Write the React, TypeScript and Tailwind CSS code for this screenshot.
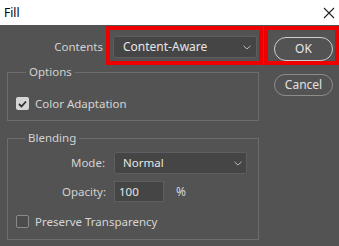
import React from "react";

const font = { fontFamily: '"Noto Sans", "Open Sans", sans-serif' };

function Chevron() {
  return (
    <svg width="8" height="5" viewBox="0 0 8 5" className="shrink-0">
      <path d="M0.5 0.8 L4 4 L7.5 0.8" fill="none" stroke="#b8b8b8" strokeWidth="1" />
    </svg>
  );
}

function Check({ checked }: { checked: boolean }) {
  if (checked) {
    return (
      <div className="w-[13px] h-[13px] rounded-[2px] bg-[#d6d6d6] flex items-center justify-center shrink-0">
        <svg width="9" height="8" viewBox="0 0 9 8">
          <path d="M1 4 L3.5 6.5 L8 1.5" fill="none" stroke="#2e2e2e" strokeWidth="1.8" />
        </svg>
      </div>
    );
  }
  return <div className="w-[13px] h-[13px] rounded-[2px] border border-[#8a8a8a] bg-[#4c4c4c] shrink-0" />;
}

export default function App() {
  return (
    <div className="w-[339px] h-[246px] overflow-hidden" style={font}>
      {/* title bar */}
      <div className="h-[25px] bg-white flex items-center justify-between">
        <span className="ml-[4px] text-[12px] text-black leading-none">Fill</span>
        <svg width="12" height="12" viewBox="0 0 12 12" className="mr-[4px]">
          <path d="M1 1 L11 11 M11 1 L1 11" stroke="#222" strokeWidth="1.1" />
        </svg>
      </div>
      {/* body */}
      <div className="h-[221px] bg-[#535353] flex pt-[1px]">
        {/* left column */}
        <div className="w-[264px] flex flex-col">
          <div className="flex items-start h-[39px]">
            <div className="w-[106px] pr-[3px] mt-[10px] h-[22px] flex items-center justify-end text-[11.5px] text-[#d2d2d2]">
              Contents
            </div>
            <div className="w-[157px] h-[39px] border-4 border-[#ee0000] pl-[3px] pr-[2px] pt-[6px] pb-[3px]">
              <div className="h-[22px] w-[144px] bg-[#454545] border border-[#5e5e5e] rounded-[2px] flex items-center justify-between pl-[9px] pr-[5px]">
                <span className="text-[12px] text-[#e6e6e6]">Content-Aware</span>
                <Chevron />
              </div>
            </div>
          </div>

          <fieldset className="ml-[7px] w-[252px] border border-[#6c6c6c] pl-[8px]">
            <legend className="ml-[10px] px-[3px] text-[11.5px] leading-[14px] text-[#d2d2d2]">Options</legend>
            <div className="mt-[18px] mb-[10px] h-[13px] flex items-center gap-[6px]">
              <Check checked />
              <span className="text-[11.5px] text-[#d6d6d6]">Color Adaptation</span>
            </div>
          </fieldset>

          <fieldset className="mt-[10px] ml-[7px] w-[252px] border border-[#6c6c6c] pl-[8px]">
            <legend className="ml-[9px] px-[3px] text-[11.5px] leading-[14px] text-[#d2d2d2]">Blending</legend>
            <div className="mt-[7px] flex items-center h-[22px]">
              <div className="w-[90px] text-right text-[11.5px] text-[#d2d2d2] pr-[1px]">Mode:</div>
              <div className="ml-[8px] h-[22px] w-[133px] bg-[#454545] border border-[#5e5e5e] rounded-[2px] flex items-center justify-between pl-[8px] pr-[4px]">
                <span className="text-[11.5px] text-[#e6e6e6]">Normal</span>
                <Chevron />
              </div>
            </div>
            <div className="mt-[7px] flex items-center h-[21px]">
              <div className="w-[90px] text-right text-[11.5px] text-[#d2d2d2]">Opacity:</div>
              <div className="ml-[8px] h-[21px] w-[50px] bg-[#454545] border border-[#5e5e5e] flex items-center pl-[4px]">
                <span className="text-[11.5px] text-[#e6e6e6]">100</span>
              </div>
              <span className="ml-[12px] text-[12px] text-[#d6d6d6]">%</span>
            </div>
            <div className="mt-[13px] mb-[11px] h-[13px] flex items-center gap-[6px]">
              <Check checked={false} />
              <span className="text-[11.5px] text-[#d6d6d6]">Preserve Transparency</span>
            </div>
          </fieldset>
        </div>

        {/* right column */}
        <div className="w-[75px] flex flex-col">
          <div className="h-[39px] w-[75px] border-4 border-[#ee0000] pl-[6px] pt-[7px]">
            <div className="w-[59px] h-[24px] rounded-full border-[1.5px] border-[#cfcfcf] flex items-center justify-center text-[12px] text-[#e8e8e8]">
              OK
            </div>
          </div>
          <div className="mt-[9px] ml-[10px] w-[59px] h-[22px] rounded-full border border-[#8c8c8c] flex items-center justify-center text-[12px] text-[#e0e0e0]">
            Cancel
          </div>
        </div>
      </div>
    </div>
  );
}
